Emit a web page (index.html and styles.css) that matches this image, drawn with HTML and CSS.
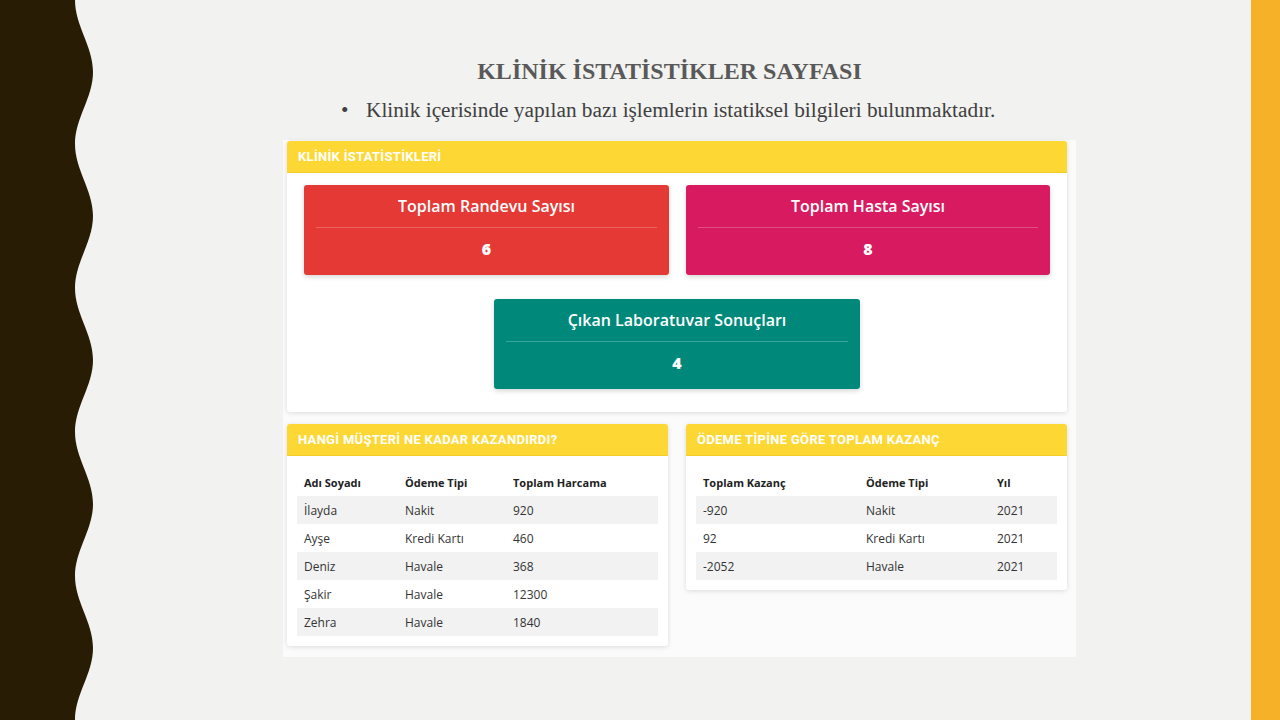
FILE: index.html
```html
<!DOCTYPE html>
<html lang="tr">
<head>
<meta charset="utf-8">
<link rel="stylesheet" href="styles.css">
</head>
<body>
<div class="slide">
  <div class="wave">
    <svg width="94" height="720" viewBox="0 0 94 720">
      <path fill="#281c04" d="M0 0 H75 C75 26 93 46 93 72 S75 118 75 144 S93 190 93 216 S75 262 75 288 S93 334 93 360 S75 406 75 432 S93 478 93 504 S75 550 75 576 S93 622 93 648 S75 694 75 720 H0 Z"/>
    </svg>
  </div>
  <main class="content">
    <h1 class="title">KLİNİK İSTATİSTİKLER SAYFASI</h1>
    <ul class="bullets">
      <li>Klinik içerisinde yapılan bazı işlemlerin istatiksel bilgileri bulunmaktadır.</li>
    </ul>
    <div class="shot">
      <section class="panel">
        <div class="panel-head">KLİNİK İSTATİSTİKLERİ</div>
        <div class="stats">
          <div class="stat red">
            <div class="stat-title">Toplam Randevu Sayısı</div>
            <div class="stat-rule"></div>
            <div class="stat-num">6</div>
          </div>
          <div class="stat pink">
            <div class="stat-title">Toplam Hasta Sayısı</div>
            <div class="stat-rule"></div>
            <div class="stat-num">8</div>
          </div>
          <div class="stat teal wide">
            <div class="stat-title">Çıkan Laboratuvar Sonuçları</div>
            <div class="stat-rule"></div>
            <div class="stat-num">4</div>
          </div>
        </div>
      </section>
      <div class="row">
        <section class="panel half">
          <div class="panel-head">HANGİ MÜŞTERİ NE KADAR KAZANDIRDI?</div>
          <div class="panel-body">
            <table class="tbl">
              <thead>
                <tr><th class="c-a1">Adı Soyadı</th><th class="c-a2">Ödeme Tipi</th><th>Toplam Harcama</th></tr>
              </thead>
              <tbody>
                <tr><td>İlayda</td><td>Nakit</td><td>920</td></tr>
                <tr><td>Ayşe</td><td>Kredi Kartı</td><td>460</td></tr>
                <tr><td>Deniz</td><td>Havale</td><td>368</td></tr>
                <tr><td>Şakir</td><td>Havale</td><td>12300</td></tr>
                <tr><td>Zehra</td><td>Havale</td><td>1840</td></tr>
              </tbody>
            </table>
          </div>
        </section>
        <section class="panel half">
          <div class="panel-head">ÖDEME TİPİNE GÖRE TOPLAM KAZANÇ</div>
          <div class="panel-body">
            <table class="tbl">
              <thead>
                <tr><th class="c-b1">Toplam Kazanç</th><th class="c-b2">Ödeme Tipi</th><th>Yıl</th></tr>
              </thead>
              <tbody>
                <tr><td>-920</td><td>Nakit</td><td>2021</td></tr>
                <tr><td>92</td><td>Kredi Kartı</td><td>2021</td></tr>
                <tr><td>-2052</td><td>Havale</td><td>2021</td></tr>
              </tbody>
            </table>
          </div>
        </section>
      </div>
    </div>
  </main>
  <div class="bar"></div>
</div>
</body>
</html>
```
FILE: styles.css
```css
* { box-sizing: border-box; }
html, body { margin: 0; padding: 0; }
body { background: #f2f2f0; }

.slide {
  width: 1280px;
  height: 720px;
  display: grid;
  grid-template-columns: 94px 1fr 29px;
  background: #f2f2f0;
  overflow: hidden;
}
.wave svg { display: block; }
.bar { background: #f6b129; }

.content {
  padding-top: 56px;
}
.title {
  margin: 0;
  padding-right: 6px;
  text-align: center;
  font-family: "Liberation Serif", serif;
  font-weight: 700;
  font-size: 24px;
  line-height: 30px;
  color: #595959;
}
.bullets {
  margin: 10px 0 0 0;
  padding: 0 0 0 246px;
  list-style: none;
  font-family: "Liberation Serif", serif;
  font-size: 21.3px;
  line-height: 28px;
  color: #404040;
}
.bullets li::before {
  content: "•";
  display: inline-block;
  width: 25px;
  padding-left: 1px;
}

.shot {
  margin: 16px 0 0 189px;
  width: 793px;
  height: 517px;
  background: #fbfbfb;
  padding: 1px 9px 10px 4px;
  font-family: "Open Sans", sans-serif;
}
.panel {
  background: #fff;
  border-radius: 3px;
  box-shadow: 0 1px 5px rgba(0,0,0,0.13);
  overflow: hidden;
}
.panel-head {
  height: 32px;
  line-height: 31px;
  background: #fdd835;
  color: #fff;
  font-family: "Roboto", sans-serif;
  font-weight: 700;
  font-size: 13px;
  letter-spacing: 0.3px;
  padding-left: 11px;
  border-bottom: 1px solid #f3cd2a;
}
.stats {
  display: grid;
  grid-template-columns: 365px 364px;
  column-gap: 17px;
  row-gap: 24px;
  padding: 12px 17px 23px 17px;
}
.stat {
  height: 90px;
  border-radius: 3px;
  color: #fff;
  text-align: center;
  padding: 10px 12px 0 12px;
  box-shadow: 0 2px 5px rgba(0,0,0,0.16);
}
.stat.red { background: #e53935; }
.stat.pink { background: #d81b60; }
.stat.teal { background: #00897b; }
.stat.wide {
  grid-column: 1 / 3;
  justify-self: center;
  width: 366px;
}
.stat-title {
  font-size: 16px;
  font-weight: 600;
  line-height: 22px;
}
.stat-rule {
  height: 1px;
  margin-top: 10px;
  background: rgba(255,255,255,0.22);
}
.stat-num {
  margin-top: 10px;
  font-size: 16px;
  font-weight: 800;
  line-height: 22px;
}

.row {
  display: flex;
  align-items: flex-start;
  gap: 18px;
  margin-top: 12px;
}
.half { width: 381px; }
.panel-body {
  padding: 12px 10px 10px 10px;
}
.tbl {
  width: 100%;
  border-collapse: collapse;
  font-size: 12px;
  color: #333;
}
.tbl th, .tbl td {
  height: 28px;
  padding: 0 7px;
  text-align: left;
  vertical-align: middle;
}
.tbl th { font-weight: 700; font-size: 11px; color: #222; }
.tbl tbody tr:nth-child(odd) { background: #f2f2f2; }
.c-a1 { width: 101px; }
.c-a2 { width: 108px; }
.c-b1 { width: 163px; }
.c-b2 { width: 131px; }
```
